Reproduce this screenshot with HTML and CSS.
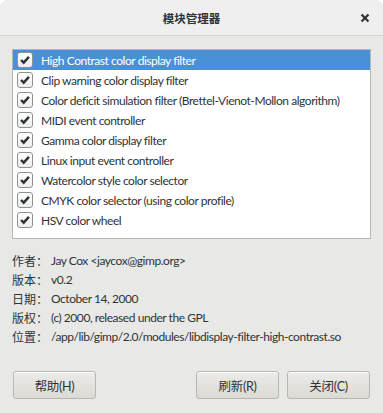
FILE: index.html
```html
<!DOCTYPE html>
<html lang="zh-CN">
<head>
  <meta charset="UTF-8">
  <title>模块管理器</title>
  <link rel="stylesheet" href="styles.css">
</head>
<body>
  <div class="dialog">
    <div class="titlebar">
      <span class="title">模块管理器</span>
      <svg class="close-icon" width="10" height="10" viewBox="0 0 10 10">
        <path d="M1.5 1.5 L8.5 8.5 M8.5 1.5 L1.5 8.5" stroke="#2e3436" stroke-width="2.2" fill="none"/>
      </svg>
    </div>

    <div class="content">
      <div class="module-list">
        <div class="row selected"><span class="check"><svg viewBox="0 0 16 16"><path d="M3.5 8 L6.5 11 L12.5 4.5" stroke="#2e3436" stroke-width="2.8" fill="none"/></svg></span>High Contrast color display filter</div>
        <div class="row"><span class="check"><svg viewBox="0 0 16 16"><path d="M3.5 8 L6.5 11 L12.5 4.5" stroke="#2e3436" stroke-width="2.8" fill="none"/></svg></span>Clip warning color display filter</div>
        <div class="row"><span class="check"><svg viewBox="0 0 16 16"><path d="M3.5 8 L6.5 11 L12.5 4.5" stroke="#2e3436" stroke-width="2.8" fill="none"/></svg></span>Color deficit simulation filter (Brettel-Vienot-Mollon algorithm)</div>
        <div class="row"><span class="check"><svg viewBox="0 0 16 16"><path d="M3.5 8 L6.5 11 L12.5 4.5" stroke="#2e3436" stroke-width="2.8" fill="none"/></svg></span>MIDI event controller</div>
        <div class="row"><span class="check"><svg viewBox="0 0 16 16"><path d="M3.5 8 L6.5 11 L12.5 4.5" stroke="#2e3436" stroke-width="2.8" fill="none"/></svg></span>Gamma color display filter</div>
        <div class="row"><span class="check"><svg viewBox="0 0 16 16"><path d="M3.5 8 L6.5 11 L12.5 4.5" stroke="#2e3436" stroke-width="2.8" fill="none"/></svg></span>Linux input event controller</div>
        <div class="row"><span class="check"><svg viewBox="0 0 16 16"><path d="M3.5 8 L6.5 11 L12.5 4.5" stroke="#2e3436" stroke-width="2.8" fill="none"/></svg></span>Watercolor style color selector</div>
        <div class="row"><span class="check"><svg viewBox="0 0 16 16"><path d="M3.5 8 L6.5 11 L12.5 4.5" stroke="#2e3436" stroke-width="2.8" fill="none"/></svg></span>CMYK color selector (using color profile)</div>
        <div class="row"><span class="check"><svg viewBox="0 0 16 16"><path d="M3.5 8 L6.5 11 L12.5 4.5" stroke="#2e3436" stroke-width="2.8" fill="none"/></svg></span>HSV color wheel</div>
      </div>

      <div class="info">
        <span class="info-label">作者：</span><span class="info-value">Jay Cox &lt;jaycox@gimp.org&gt;</span>
        <span class="info-label">版本：</span><span class="info-value">v0.2</span>
        <span class="info-label">日期：</span><span class="info-value">October 14, 2000</span>
        <span class="info-label">版权：</span><span class="info-value">(c) 2000, released under the GPL</span>
        <span class="info-label">位置：</span><span class="info-value">/app/lib/gimp/2.0/modules/libdisplay-filter-high-contrast.so</span>
      </div>

      <div class="buttons">
        <button class="btn">帮助(H)</button>
        <span class="spacer"></span>
        <button class="btn">刷新(R)</button>
        <button class="btn">关闭(C)</button>
      </div>
    </div>
  </div>
</body>
</html>
```

FILE: styles.css
```css
body {
  margin: 0;
  background: #ffffff;
  font-family: Lato, "Noto Sans CJK SC", sans-serif;
  font-size: 12px;
  color: #2e3436;
}

.dialog {
  width: 383px;
  height: 413px;
  background-color: #e8e8e7;
  border-radius: 8px 8px 0 0;
  overflow: hidden;
  display: flex;
  flex-direction: column;
}

/* 标题栏 */
.titlebar {
  height: 35px;
  flex: none;
  background-color: #efefef;
  border-bottom: 1px solid #d4d4d1;
  display: flex;
  align-items: center;
  justify-content: center;
  position: relative;
}

.title {
  font-weight: bold;
  font-size: 11.5px;
}

.close-icon {
  position: absolute;
  right: 13px;
  top: 13px;
}

.content {
  padding: 13px 12px 0 12px;
  display: flex;
  flex-direction: column;
}

/* 模块列表 */
.module-list {
  height: 188px;
  background-color: #ffffff;
  border: 1px solid #b6b6b3;
}

.row {
  height: 20px;
  display: flex;
  align-items: center;
  padding-left: 4px;
  letter-spacing: -0.45px;
  white-space: nowrap;
}

.row.selected {
  background-color: #4a90d9;
  color: #ffffff;
}

.check {
  width: 14px;
  height: 14px;
  flex: none;
  border: 1px solid #8f9291;
  border-radius: 3px;
  background: linear-gradient(#ffffff, #ededec);
  margin-right: 8px;
  display: flex;
}

.check svg {
  width: 14px;
  height: 14px;
}

/* 模块信息 */
.info {
  margin-top: 12px;
  display: grid;
  grid-template-columns: 39px 1fr;
  grid-auto-rows: 19px;
  align-items: center;
  letter-spacing: -0.45px;
  white-space: nowrap;
}

.info-label {
  letter-spacing: 0;
}

/* 按钮 */
.buttons {
  margin-top: 25px;
  display: flex;
  gap: 8px;
  padding: 0 1px;
}

.spacer {
  flex: 1;
}

.btn {
  width: 83px;
  height: 28px;
  font-family: Lato, "Noto Sans CJK SC", sans-serif;
  font-size: 12.5px;
  color: #2e3436;
  letter-spacing: -0.3px;
  background: linear-gradient(#edebe9, #dcdad5);
  border: 1px solid #b6b6b3;
  border-radius: 3px;
  box-shadow: inset 0 1px #ffffff;
  padding: 0;
}
```
